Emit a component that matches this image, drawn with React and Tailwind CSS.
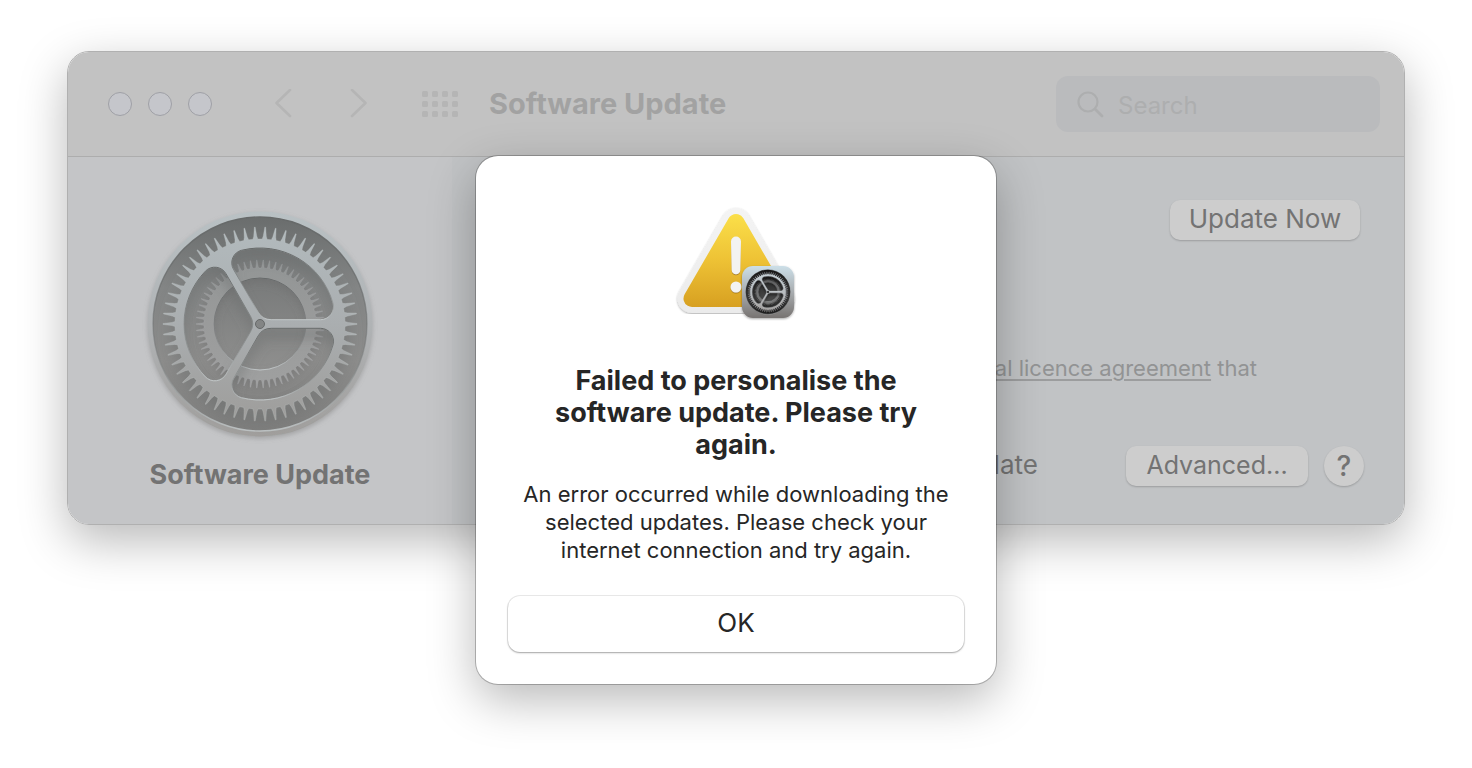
import React, { useState } from 'react'

const polar = (r, deg) => {
  const a = (deg * Math.PI) / 180
  return [r * Math.cos(a), r * Math.sin(a)]
}
const pt = (p) => `${p[0].toFixed(2)} ${p[1].toFixed(2)}`

// toothed outline, base radius r1 and tip radius r2
const teethPath = (count, r1, r2) => {
  const step = 360 / count
  let d = ''
  for (let i = 0; i < count; i++) {
    const a = i * step
    d += `${i === 0 ? 'M' : 'L'}${pt(polar(r1, a - step * 0.27))}`
    d += `L${pt(polar(r1 + (r2 - r1) * 0.25, a - step * 0.16))}`
    d += `L${pt(polar(r2, a - step * 0.04))}L${pt(polar(r2, a + step * 0.04))}`
    d += `L${pt(polar(r1 + (r2 - r1) * 0.25, a + step * 0.16))}`
    d += `L${pt(polar(r1, a + step * 0.27))}`
  }
  return d + 'Z'
}

const circlePath = (r) => `M${-r} 0A${r} ${r} 0 1 0 ${r} 0A${r} ${r} 0 1 0 ${-r} 0Z`

// opening between two spokes, rotated by rot degrees
const openingPath = (rot) => {
  const R = 76, half = 4.3, corner = 13, hub = 15
  const cy = half + corner
  const cx = Math.sqrt((R - corner) ** 2 - cy ** 2)
  const outerAngle = (Math.atan2(cy, cx) * 180) / Math.PI
  const lineAngle = (Math.atan2(half, cx) * 180) / Math.PI
  const lineR = Math.hypot(cx, half)
  const hubX = (half + hub) / Math.tan(Math.PI / 3)
  const hubAngle = (Math.atan2(half, hubX) * 180) / Math.PI
  const hubR = Math.hypot(hubX, half)
  return (
    `M${pt(polar(hubR, rot + hubAngle))}L${pt(polar(lineR, rot + lineAngle))}` +
    `A${corner} ${corner} 0 0 1 ${pt(polar(R, rot + outerAngle))}` +
    `A${R} ${R} 0 0 1 ${pt(polar(R, rot + 120 - outerAngle))}` +
    `A${corner} ${corner} 0 0 1 ${pt(polar(lineR, rot + 120 - lineAngle))}` +
    `L${pt(polar(hubR, rot + 120 - hubAngle))}` +
    `A${hub} ${hub} 0 0 1 ${pt(polar(hubR, rot + hubAngle))}Z`
  )
}

const innerGear = teethPath(62, 56, 64) + circlePath(46)
const outerGear = teethPath(58, 85, 97) + [0, 120, 240].map(openingPath).join('') + circlePath(4)

const mutedGear = {
  plate: ['#6a6d6d', '#838585', '#8c8c8b', '#7e7e7d'],
  inner: ['#929595', '#9a9b9b', '#9fa0a0'],
  core: ['#777979', '#90908f'],
  outer: ['#b2babd', '#aaaeb0', '#9e9d9b'],
  edge: '#c0c5c6',
  shade: '#666969',
}

const fullGear = {
  plate: ['#151515', '#2c2c2c', '#363636', '#222222'],
  inner: ['#5b5c5d', '#717273', '#777777'],
  core: ['#2c2d2d', '#4d4d4d'],
  outer: ['#c6d2d8', '#b9bdc0', '#a3a09e'],
  edge: '#dfe5e8',
  shade: '#0b0b0b',
}

const Stops = ({ colors }) =>
  colors.map((c, i) => <stop key={i} offset={i / (colors.length - 1)} stopColor={c} />)

// gear drawing centred on 0,0 with a plate radius of 107
const Gear = ({ id, colors }) => (
  <g>
    <defs>
      <linearGradient id={`${id}-plate`} x1='0' y1='0' x2='0' y2='1'><Stops colors={colors.plate} /></linearGradient>
      <linearGradient id={`${id}-inner`} x1='0' y1='0' x2='0' y2='1'><Stops colors={colors.inner} /></linearGradient>
      <linearGradient id={`${id}-core`} x1='0' y1='0' x2='0' y2='1'><Stops colors={colors.core} /></linearGradient>
      <linearGradient id={`${id}-outer`} x1='0' y1='0' x2='0' y2='1'><Stops colors={colors.outer} /></linearGradient>
      <linearGradient id={`${id}-lip`} x1='0' y1='0' x2='0' y2='1'>
        <stop offset='0' stopColor={colors.shade} />
        <stop offset='0.55' stopColor={colors.shade} stopOpacity='0.4' />
        <stop offset='1' stopColor={colors.edge} />
      </linearGradient>
      <filter id={`${id}-drop`} x='-20%' y='-20%' width='140%' height='140%'>
        <feDropShadow dx='0' dy='10' stdDeviation='6' floodColor={colors.shade} floodOpacity='0.45' />
      </filter>
      <filter id={`${id}-soft`} x='-20%' y='-20%' width='140%' height='140%'>
        <feDropShadow dx='0' dy='4' stdDeviation='4' floodColor={colors.shade} floodOpacity='0.4' />
      </filter>
    </defs>
    <circle r='107' fill={`url(#${id}-plate)`} stroke={`url(#${id}-lip)`} strokeWidth='1.4' />
    <circle r='50' fill={`url(#${id}-core)`} />
    <path d={innerGear} fillRule='evenodd' fill={`url(#${id}-inner)`} stroke={colors.edge} strokeOpacity='0.3' strokeWidth='0.5' filter={`url(#${id}-soft)`} />
    <circle r='46' fill='none' stroke={`url(#${id}-lip)`} />
    <path d={outerGear} fillRule='evenodd' fill={`url(#${id}-outer)`} stroke={colors.edge} strokeOpacity='0.5' strokeWidth='0.6' filter={`url(#${id}-drop)`} />
    {[0, 120, 240].map((rot) => (
      <path key={rot} d={openingPath(rot)} fill='none' stroke={`url(#${id}-lip)`} strokeWidth='1' />
    ))}
    <circle r='4.5' fill={colors.plate[1]} stroke={colors.shade} strokeWidth='1' />
  </g>
)

const UpdateIcon = () => (
  <svg viewBox='-120 -120 240 240' className='w-[240px] h-[240px]' aria-hidden='true'>
    <defs>
      <linearGradient id='rim' x1='0' y1='0' x2='0' y2='1'><Stops colors={['#b9c1c4', '#b0b3b5', '#a19f9d']} /></linearGradient>
      <filter id='rim-shadow' x='-10%' y='-10%' width='120%' height='120%'>
        <feDropShadow dx='0' dy='2' stdDeviation='2.5' floodColor='#7d7d7d' floodOpacity='0.45' />
      </filter>
    </defs>
    <circle r='112.5' fill='url(#rim)' filter='url(#rim-shadow)' />
    <Gear id='big' colors={mutedGear} />
  </svg>
)

const AlertIcon = () => (
  <svg viewBox='0 0 128 128' className='w-32 h-32' aria-hidden='true'>
    <defs>
      <linearGradient id='yellow' gradientUnits='userSpaceOnUse' x1='0' y1='13' x2='0' y2='107'><Stops colors={['#fbe04a', '#eec235', '#d7a021']} /></linearGradient>
      <linearGradient id='white' gradientUnits='userSpaceOnUse' x1='0' y1='7' x2='0' y2='113'><Stops colors={['#f4f4f4', '#ebebeb']} /></linearGradient>
      <linearGradient id='badge' x1='0' y1='0' x2='0' y2='1'><Stops colors={['#ccdfe8', '#a9adb0', '#777371']} /></linearGradient>
      <filter id='tri-shadow' x='-20%' y='-20%' width='140%' height='140%'>
        <feDropShadow dx='0' dy='1' stdDeviation='1' floodColor='#000' floodOpacity='0.35' />
      </filter>
      <filter id='mark-shadow' x='-40%' y='-40%' width='180%' height='180%'>
        <feDropShadow dx='0' dy='1' stdDeviation='0.6' floodColor='#8a6100' floodOpacity='0.65' />
      </filter>
    </defs>
    <path d='M64 22.500L20 98.500H108Z' fill='url(#white)' stroke='url(#white)' strokeWidth='29' strokeLinejoin='round' filter='url(#tri-shadow)' />
    <path d='M64 22.500L20 98.500H108Z' fill='url(#yellow)' stroke='url(#yellow)' strokeWidth='17' strokeLinejoin='round' />
    <g fill='#f3f3f1' filter='url(#mark-shadow)'>
      <path d='M59 41.5a5 5 0 0 1 10 0l-.7 28.5a4.3 4.3 0 0 1-8.6 0Z' />
      <circle cx='64' cy='87' r='5.5' />
    </g>
    <rect x='70' y='66' width='52' height='52' rx='11' fill='url(#badge)' filter='url(#tri-shadow)' />
    <g transform='translate(96 92) scale(0.208)'>
      <Gear id='small' colors={fullGear} />
    </g>
  </svg>
)

const Toolbar = () => {
  const [query, setQuery] = useState('')
  return (
    <header className='flex items-center h-[105px] pl-10 pr-6 bg-[#c2c2c2] border-b border-[#adadad]'>
      <div className='flex gap-4'>
        <button aria-label='Close' className='w-6 h-6 rounded-full bg-[#c5c6cb] border border-[#9fa0a6]' />
        <button aria-label='Minimise' className='w-6 h-6 rounded-full bg-[#c5c6cb] border border-[#9fa0a6]' />
        <button aria-label='Zoom' className='w-6 h-6 rounded-full bg-[#c5c6cb] border border-[#9fa0a6]' />
      </div>
      <nav className='flex items-center ml-[33px] text-[#b5b5b5]'>
        <button aria-label='Back' className='flex justify-center w-[76px]'>
          <svg width='18' height='30' viewBox='0 0 18 30' fill='none' stroke='currentColor' strokeWidth='2.6' strokeLinecap='round' strokeLinejoin='round'>
            <path d='M16 1L2.500 14L16 27' />
          </svg>
        </button>
        <button aria-label='Forward' className='flex justify-center w-[76px]'>
          <svg width='18' height='30' viewBox='0 0 18 30' fill='none' stroke='currentColor' strokeWidth='2.6' strokeLinecap='round' strokeLinejoin='round'>
            <path d='M2 1L15.500 14L2 27' />
          </svg>
        </button>
        <button aria-label='Show All' className='flex justify-center w-[86px]'>
          <svg width='36' height='26' viewBox='0 0 36 26' fill='currentColor'>
            {[0, 10, 20].map((y) =>
              [0, 10, 20, 30].map((x) => <rect key={`${x}-${y}`} x={x} y={y} width='6' height='6' rx='1.500' />)
            )}
          </svg>
        </button>
      </nav>
      <h1 className='ml-1.5 text-[29px] leading-8 font-bold text-[#a2a2a2]'>Software Update</h1>
      <label className='flex items-center gap-3.5 w-[324px] h-14 ml-auto px-5 rounded-xl bg-[#babbbd]'>
        <svg width='28' height='28' viewBox='0 0 28 28' fill='none' stroke='#adaeaf' strokeWidth='2.2' strokeLinecap='round' className='shrink-0'>
          <circle cx='12' cy='12' r='9.500' />
          <path d='M19 19L26 26' strokeWidth='2.8' />
        </svg>
        <input type='search' aria-label='Search' placeholder='Search' value={query} onChange={(e) => setQuery(e.target.value)}
          className='min-w-0 w-full pt-1 text-2xl text-[#767676] placeholder-[#adaeaf] outline-none' />
      </label>
    </header>
  )
}

const Dialog = () => (
  <div role='alertdialog' aria-labelledby='alert-title' aria-describedby='alert-text'
    className='absolute top-[105px] left-1/2 -translate-x-1/2 flex flex-col items-center w-[520px] px-8 pt-11 pb-8 rounded-[22px] bg-white text-center text-[#262626] shadow-[0_0_0_1px_rgba(0,0,0,0.24),0_16px_48px_rgba(0,0,0,0.28)]'>
    <AlertIcon />
    <h2 id='alert-title' className='max-w-[400px] mt-[37px] text-[27px] leading-8 font-bold'>
      Failed to personalise the software update. Please try again.
    </h2>
    <p id='alert-text' className='max-w-[440px] mt-[19px] text-[22px] leading-7'>
      An error occurred while downloading the selected updates. Please check your internet connection and try again.
    </p>
    <button className='w-full h-14 mt-8 pb-0.5 rounded-xl bg-white text-[26px] leading-8 shadow-[0_0_0_1px_rgba(0,0,0,0.08),0_1px_2px_rgba(0,0,0,0.3)]'>OK</button>
  </div>
)

export default function App() {
  return (
    <div className="min-h-screen px-[67px] pt-[51px] pb-10 bg-white overflow-hidden font-['Inter',sans-serif]">
      <main className='relative'>
        <div className='rounded-[22px] border border-[#b0b0b0] overflow-hidden shadow-[0_16px_48px_rgba(0,0,0,0.28)]'>
          <Toolbar />
          <div className='flex h-[367px]'>
            <aside className='flex flex-col items-center shrink-0 w-[384px] pt-[47px] bg-[#c4c5c7]'>
              <UpdateIcon />
              <p className='mt-[15px] text-[27px] leading-8 font-bold text-[#737373]'>Software Update</p>
            </aside>
            <section className='flex flex-col items-end flex-1 pt-[43px] pb-[38px] bg-[#c1c3c5] text-[26px] text-[#737373] whitespace-nowrap'>
              <button className='w-[190px] h-10 mr-11 pb-0.5 rounded-[10px] bg-[#cdcdcd] leading-8 shadow-[0_1px_2px_rgba(0,0,0,0.2)]'>Update Now</button>
              <p className='mt-[114px] mr-[147px] text-[22px] leading-7 text-[#929394]'>
                <a href='#licence' className='underline decoration-[#9c9d9e] underline-offset-3'>original licence agreement</a> that
              </p>
              <div className='flex items-center mt-auto mr-10'>
                <span className='mr-[88px] pb-0.5'>up to date</span>
                <button className='w-[182px] h-10 mr-4 pb-0.5 rounded-[10px] bg-[#cdcdcd] text-[25px] leading-8 shadow-[0_1px_2px_rgba(0,0,0,0.2)]'>Advanced...</button>
                <button className='w-10 h-10 rounded-full bg-[#cdcdcd] text-[28px] leading-8 font-medium shadow-[0_1px_2px_rgba(0,0,0,0.2)]'>?</button>
              </div>
            </section>
          </div>
        </div>
        <Dialog />
      </main>
    </div>
  )
}
